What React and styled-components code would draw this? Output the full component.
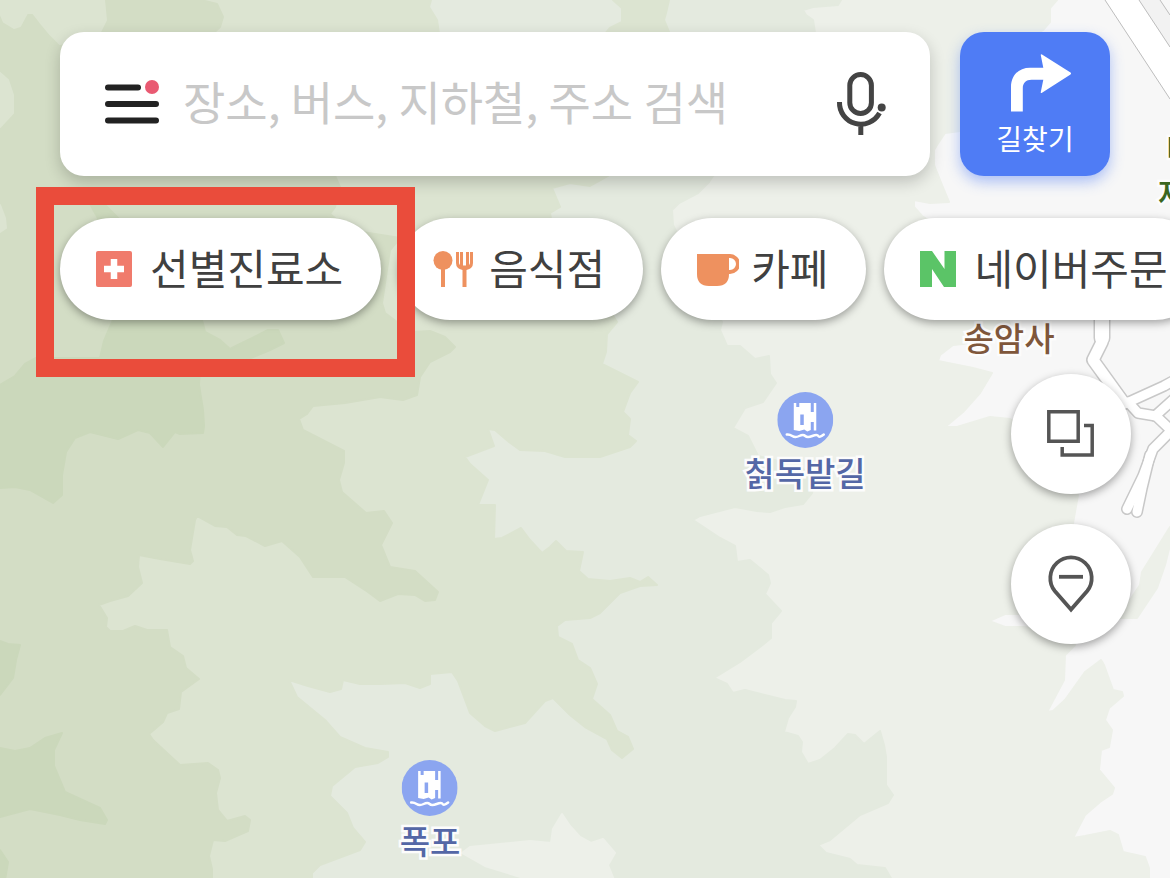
import React, { useState } from 'react';
import styled, { createGlobalStyle } from 'styled-components';

const GlobalStyle = createGlobalStyle`
  * {
    box-sizing: border-box;
  }

  body {
    margin: 0;
    background: #f7f7f7;
    font-family: 'Noto Sans CJK KR', 'Noto Sans', sans-serif;
  }

  button,
  input {
    font-family: inherit;
  }
`;

// forest tones, from the lightest (outer) to the darkest (inner)
const forest = [
  {
    color: '#edf0e9',
    shapes: [
      '0,0 1057,0 1050,8 1050,22 1043,30 1000,60 970,110 960,131 945,133 937,145 934,150 934,165 942,185 949,202 930,203 914,200 914,207 922,216 960,240 1000,280 1010,325 995,338 963,344 953,345 940,355 938,361 973,368 992,373 980,393 963,412 945,427 957,427 990,417 1010,419 1060,450 1078,495 1073,523 1060,580 1035,612 1022,614 1005,614 989,621 1005,627 1022,627 1060,630 1075,645 1065,655 1064,680 1047,712 1053,711 1065,700 1085,672 1101,660 1104,665 1113,690 1122,692 1123,696 1109,708 1105,720 1112,730 1109,747 1101,750 1099,770 1114,788 1112,794 1100,802 1085,815 1073,838 1085,836 1110,831 1118,835 1123,852 1145,857 1149,868 1149,880 0,880',
      '1170,527 1152,556 1142,572 1140,585 1130,600 1120,618 1137,618 1157,588 1165,565 1170,545',
    ],
  },
  {
    color: '#e4eadf',
    shapes: [
      '0,0 841,0 838,5 813,7 803,10 806,15 813,20 815,33 790,100 713,176 709,182 698,193 679,203 672,210 673,225 700,280 722,322 720,330 727,346 740,346 755,359 769,356 770,374 776,383 763,402 745,408 733,428 748,436 758,456 800,466 815,480 812,493 803,504 785,507 770,512 757,511 735,507 700,516 693,520 720,538 735,546 737,562 750,560 768,575 770,583 765,594 781,611 771,623 771,638 760,647 740,662 714,678 727,684 733,693 745,690 785,700 796,701 795,707 788,718 784,732 798,736 802,742 801,752 808,764 820,760 835,748 848,734 855,735 864,744 880,731 884,745 886,757 886,785 893,795 888,803 860,815 830,840 818,845 826,853 850,859 857,865 885,868 892,880 0,880',
    ],
  },
  {
    color: '#edf0e9',
    shapes: [
      '562,814 553,829 551,843 530,841 470,847 462,853 485,866 530,880 614,880 608,865 615,853 603,839 591,843 580,837 570,826',
    ],
  },
  {
    color: '#dce4d1',
    shapes: [
      '0,0 431,0 429,7 437,20 439,34 500,90 600,40 610,28 622,22 622,8 613,0 669,0 666,13 664,20 669,32 640,120 608,176 590,186 570,183 552,188 560,207 550,213 552,225 590,280 617,322 607,334 606,352 602,364 638,382 630,393 623,412 630,419 628,435 636,441 630,447 600,457 565,457 545,451 520,450 509,442 495,430 488,429 494,446 465,457 470,464 488,480 478,505 495,505 494,539 502,538 521,528 530,540 542,553 550,547 556,541 566,551 583,552 579,571 588,579 610,581 630,578 640,582 648,577 657,585 640,586 620,593 600,613 590,618 565,620 557,626 558,637 572,644 578,660 590,668 597,684 592,699 610,715 617,731 628,737 633,749 622,758 612,750 607,739 585,727 570,715 553,698 545,701 525,723 495,731 485,726 470,713 458,681 452,672 430,674 430,684 420,688 405,683 380,684 360,684 343,680 341,689 330,692 308,686 289,680 297,697 325,720 340,737 365,748 388,752 388,757 378,763 355,767 332,786 330,796 347,813 353,828 365,842 360,850 320,865 312,873 312,880 0,880',
    ],
  },
  {
    color: '#d3ddc5',
    shapes: [
      '0,0 201,0 217,4 223,17 220,27 208,38 240,120 335,176 340,187 335,207 330,214 350,230 400,238 390,250 382,303 385,313 397,322 413,332 430,331 445,337 455,347 450,352 430,362 420,377 417,395 403,400 380,397 345,403 313,406 307,414 299,419 303,430 344,451 344,463 339,480 342,492 366,513 384,511 392,523 381,545 390,567 415,571 438,592 435,600 425,601 415,595 398,594 380,601 368,592 345,577 313,577 300,557 282,541 265,546 246,536 237,535 227,527 215,526 197,516 195,520 190,550 193,561 190,564 160,559 139,555 138,567 142,583 128,596 110,601 99,605 107,618 106,627 110,631 123,631 135,626 147,630 167,630 170,647 183,656 186,668 199,679 181,692 179,709 167,713 163,722 149,734 153,740 180,765 208,763 218,770 220,778 216,793 218,810 227,821 245,816 250,820 248,831 225,841 213,840 209,856 212,869 212,880 0,880',
    ],
  },
  {
    color: '#dce4d1',
    shapes: [
      '0,0 104,0 106,20 98,36 60,44 50,34 40,22 33,13 27,13 20,26 14,28 4,22 0,13',
      '0,73 8,80 13,95 13,113 0,127',
      '0,205 5,218 6,228 0,232',
    ],
  },
  {
    color: '#cbd8bb',
    shapes: [
      '88,200 105,205 122,222 100,222',
      '0,385 15,376 25,364 36,358 100,358 104,341 113,320 202,320 205,332 220,340 230,349 238,345 268,330 278,330 284,343 270,350 246,360 200,366 199,385 203,410 204,426 203,433 180,434 175,432 163,447 150,433 138,430 118,439 90,432 75,438 66,452 62,475 62,495 53,503 30,490 15,487 0,488',
      '0,641 8,644 20,645 16,660 13,678 0,695',
      '0,748 15,751 30,748 45,738 62,733 54,750 54,766 65,792 100,808 107,820 105,824 80,820 60,815 30,809 0,817',
      '0,850 8,862 5,880 0,880',
    ],
  },
];

const roads = [
  { d: 'M1103 312L1102 342L1093 360L1124 403', w: 11 },
  { d: 'M1102 316V338', w: 14 },
  { d: 'M1120 406L1164 386L1175 380', w: 9 },
  { d: 'M1128 402L1138 413L1156 416L1175 434', w: 9 },
  { d: 'M1155 416L1175 398', w: 9 },
  { d: 'M1172 430L1153 449L1143 476L1127 509', w: 9 },
  { d: 'M1150 455L1142 488L1137 512', w: 9 },
];

const MapCanvas = () => (
  <MapSvg viewBox="0 0 1170 878" preserveAspectRatio="xMinYMin slice" aria-hidden="true">
    <rect width="1170" height="878" fill="#f7f7f7" />
    {forest.map((tone, i) => (
      <g key={i} fill={tone.color} stroke={tone.color} strokeWidth="2" strokeLinejoin="round">
        {tone.shapes.map((points) => (
          <polygon key={points} points={points} />
        ))}
      </g>
    ))}
    <path d="M1105 0L1170 99V47L1139 0Z" fill="#fff" />
    <path d="M1139 0L1170 47V15L1160 0Z" fill="#f2f2f2" />
    <path d="M1105 0L1170 99M1139 0L1170 47M1160 0L1170 15" stroke="#bdbdbd" fill="none" />
    <g fill="none" strokeLinecap="round" strokeLinejoin="round">
      {roads.map((road) => (
        <path key={road.d} d={road.d} stroke="#c8c8c8" strokeWidth={road.w + 3} />
      ))}
      {roads.map((road) => (
        <path key={road.d} d={road.d} stroke="#fff" strokeWidth={road.w} />
      ))}
    </g>
  </MapSvg>
);

const MenuIcon = () => (
  <svg width="54" height="48" viewBox="0 0 54 48">
    <path d="M3 7.5H33M3 24H51M3 40.5H51" stroke="#222" strokeWidth="6" strokeLinecap="round" />
    <circle cx="47" cy="7" r="7" fill="#e95a72" />
  </svg>
);

const MicIcon = () => (
  <svg width="50" height="68" viewBox="0 0 50 68" fill="none" stroke="#444" strokeWidth="5">
    <rect x="13.8" y="4.5" width="21.6" height="39" rx="10.8" />
    <path d="M3.5 32A21.3 21.3 0 0 0 43.5 43M24.8 54V65" />
    <circle cx="45.7" cy="37.5" r="4" fill="#444" stroke="none" />
  </svg>
);

const RouteIcon = () => (
  <svg width="72" height="58" viewBox="-12 0 72 58">
    <path
      d="M0 57.5V33C0 21 8 13.7 19 13.7H32.3L29.7 .8Q29.9 0 31 .5L59.5 18.6Q60.6 19.5 59.5 20.4L31 38.8Q29.9 39.3 29.7 38.4L32.3 25.7H20.5C15 25.7 11.8 29 11.8 34V57.5Z"
      fill="#fff"
    />
  </svg>
);

const ClinicIcon = () => (
  <svg width="42" height="36" viewBox="0 0 42 36">
    <rect width="36" height="36" rx="2" fill="#f07b6c" />
    <path d="M18 8V28M8 18H28" stroke="#fff" strokeWidth="6.5" />
  </svg>
);

const FoodIcon = () => (
  <svg width="42" height="36" viewBox="1 0 42 36" fill="#ee915f" overflow="visible">
    <circle cx="9" cy="9.5" r="9.5" />
    <rect x="7" y="16" width="4" height="20" />
    <path d="M22 1H25V11.5Q25 13 26 14V1H29V14.5H32V1H35V14Q36 13 36 11.5V1H39V12Q39 17.5 32.5 19V36H28.5V19Q22 17.5 22 12Z" />
  </svg>
);

const CafeIcon = () => (
  <svg width="42" height="36" viewBox="0 0 42 36">
    <path d="M0 3H32V23Q32 35 20 35H12Q0 35 0 23Z" fill="#ee915f" />
    <path d="M30 5H33A7.3 7.3 0 0 1 33 21H30" fill="none" stroke="#ee915f" strokeWidth="4" />
  </svg>
);

const OrderIcon = () => (
  <svg width="42" height="36" viewBox="0 0 42 36">
    <path d="M0 0H12L24.5 18V0H36V36H24L12 18V36H0Z" fill="#5bc467" />
  </svg>
);

const LayersIcon = () => (
  <svg width="48" height="48" viewBox="0 0 48 48" fill="none" stroke="#555" strokeWidth="3.5">
    <path d="M1.8 1.8H31.2V31.2H1.8Z" />
    <path d="M37 15.5H45.2V45H15.2V37" />
  </svg>
);

const SpotIcon = () => (
  <svg width="48" height="60" viewBox="0 0 48 60" fill="none" stroke="#555" strokeWidth="3.8">
    <path d="M24 55.5L7.800 37A20.7 20.7 0 1 1 40.2 37Z" />
    <path d="M12 22.8H36" />
  </svg>
);

const WaterfallIcon = () => (
  <svg width="56" height="56" viewBox="0 0 56 56">
    <circle cx="28" cy="28" r="28" fill="#8ba5f0" />
    <path
      d="M16.5 11H19V15H22V11H33.5V20H36.5V11H39V38.5H36.5V30H33.5V38L30 39.5L27 37.5L22 39L16.5 38ZM23 22.5V33H26.5V22.5Z"
      fill="#fff"
      fillRule="evenodd"
    />
    <path
      d="M9.500 42.500Q12 42 15 44T22 44T28 44T35 44T41 44T46.500 42.500"
      fill="none"
      stroke="#fff"
      strokeWidth="2.5"
      strokeLinecap="round"
    />
  </svg>
);

const chips = [
  { label: '선별진료소', Icon: ClinicIcon, marked: true },
  { label: '음식점', Icon: FoodIcon },
  { label: '카페', Icon: CafeIcon },
  { label: '네이버주문', Icon: OrderIcon },
];

const App = () => {
  const [query, setQuery] = useState('');

  return (
    <Page>
      <GlobalStyle />
      <MapCanvas />
      <Place $x={805} $y={392} $color="#5467a6">
        <WaterfallIcon />
        <span>칡독밭길</span>
      </Place>
      <Place $x={430} $y={760} $color="#5467a6">
        <WaterfallIcon />
        <span>폭포</span>
      </Place>
      <Place $x={1009} $y={317} $color="#7f573b">
        <span>송암사</span>
      </Place>
      <Place $x={1181} $y={128} $color="#3b661f">
        <span>미</span>
      </Place>
      <Place $x={1173} $y={172} $color="#3b661f">
        <span>재</span>
      </Place>

      <Overlay>
        <TopBar>
          <SearchBox role="search" onSubmit={(e) => e.preventDefault()}>
            <IconButton type="button" aria-label="메뉴">
              <MenuIcon />
            </IconButton>
            <SearchInput
              type="text"
              aria-label="검색"
              value={query}
              placeholder="장소, 버스, 지하철, 주소 검색"
              onChange={(e) => setQuery(e.target.value)}
            />
            <IconButton type="button" aria-label="음성 검색">
              <MicIcon />
            </IconButton>
          </SearchBox>
          <RouteButton type="button">
            <RouteIcon />
            <span>길찾기</span>
          </RouteButton>
        </TopBar>

        <ChipRow>
          {chips.map(({ label, Icon, marked }) => (
            <ChipItem key={label} $marked={marked}>
              <Chip type="button">
                <Icon />
                <ChipLabel>{label}</ChipLabel>
              </Chip>
              {marked && <Marker />}
            </ChipItem>
          ))}
        </ChipRow>

        <MapControls>
          <RoundButton type="button" aria-label="지도 레이어">
            <LayersIcon />
          </RoundButton>
          <RoundButton type="button" aria-label="장소 표시">
            <SpotIcon />
          </RoundButton>
        </MapControls>
      </Overlay>
    </Page>
  );
};

const Page = styled.main`
  position: relative;
  min-height: 100vh;
  overflow: hidden;
`;

const MapSvg = styled.svg`
  position: absolute;
  inset: 0;
  width: 100%;
  height: 100%;
`;

const Place = styled.div`
  position: absolute;
  left: ${({ $x }) => $x}px;
  top: ${({ $y }) => $y}px;
  transform: translateX(-50%);
  display: flex;
  flex-direction: column;
  align-items: center;
  gap: 4px;
  color: ${({ $color }) => $color};
  font-size: 33px;
  font-weight: 500;
  line-height: 40px;
  white-space: nowrap;

  span {
    -webkit-text-stroke: 5px #fcfcfc;
    paint-order: stroke fill;
  }
`;

const Overlay = styled.div`
  position: relative;
  display: flex;
  flex-direction: column;
`;

const TopBar = styled.header`
  display: flex;
  gap: 30px;
  padding: 32px 60px 42px;
`;

const SearchBox = styled.form`
  flex: 1;
  min-width: 0;
  height: 144px;
  display: flex;
  align-items: center;
  gap: 24px;
  padding: 0 44px 0 45px;
  background: #fff;
  border-radius: 24px;
  box-shadow: 0 6px 16px rgba(0, 0, 0, 0.2);
`;

const IconButton = styled.button`
  display: flex;
  padding: 0;
  border: none;
  background: none;
  cursor: pointer;
`;

const SearchInput = styled.input`
  flex: 1;
  min-width: 0;
  height: 80px;
  padding: 0 0 8px;
  border: none;
  outline: none;
  background: none;
  color: #404040;
  font-size: 46px;
  font-weight: 400;

  &::placeholder {
    color: #c8c8c8;
    opacity: 1;
  }
`;

const RouteButton = styled.button`
  width: 150px;
  height: 144px;
  display: flex;
  flex-direction: column;
  align-items: center;
  gap: 6px;
  padding: 22px 0 0;
  border: none;
  border-radius: 24px;
  background: #4f7cf5;
  box-shadow: 0 6px 14px rgba(79, 124, 245, 0.45);
  color: #fff;
  font-size: 28px;
  font-weight: 400;
  line-height: 40px;
  cursor: pointer;
`;

const ChipRow = styled.nav`
  display: flex;
  gap: 18px;
  padding-left: 60px;
`;

const ChipItem = styled.div`
  position: relative;
  flex-shrink: 0;
  z-index: ${({ $marked }) => ($marked ? 1 : 0)};
`;

const Chip = styled.button`
  height: 102px;
  display: flex;
  align-items: center;
  gap: 12px;
  padding: 0 38px 0 36px;
  border: none;
  border-radius: 51px;
  background: #fff;
  box-shadow: 0 3px 8px rgba(0, 0, 0, 0.35);
  color: #404040;
  font-size: 42px;
  font-weight: 400;
  white-space: nowrap;
  cursor: pointer;
`;

const ChipLabel = styled.span`
  padding-bottom: 6px;
`;

const Marker = styled.div`
  position: absolute;
  inset: -31px -34px -57px -24px;
  border: 18px solid #ea4c3b;
  pointer-events: none;
`;

const MapControls = styled.div`
  align-self: flex-end;
  display: flex;
  flex-direction: column;
  gap: 30px;
  padding: 54px 39px 0 0;
`;

const RoundButton = styled.button`
  width: 120px;
  height: 120px;
  display: flex;
  align-items: center;
  justify-content: center;
  padding: 0;
  border: none;
  border-radius: 50%;
  background: #fff;
  box-shadow: 0 3px 8px rgba(0, 0, 0, 0.35);
  cursor: pointer;
`;

export default App;
